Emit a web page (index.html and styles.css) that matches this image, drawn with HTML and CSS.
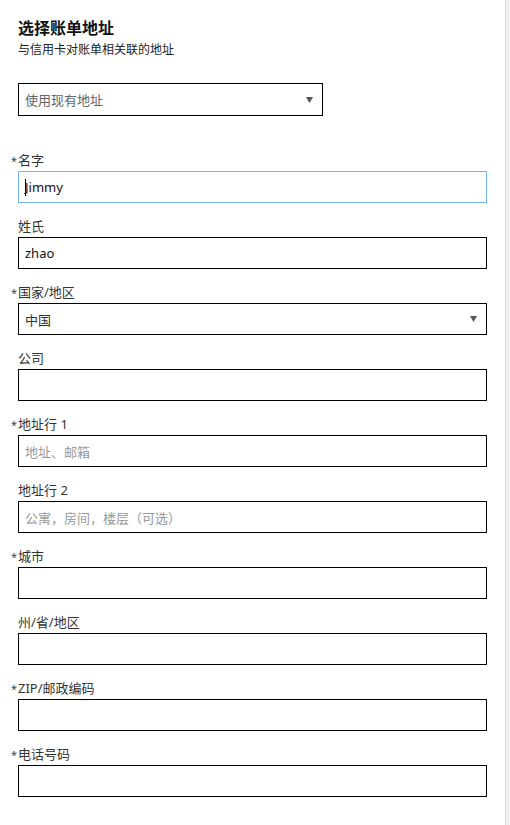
FILE: index.html
```html
<!DOCTYPE html>
<html lang="zh-CN">
<head>
<meta charset="utf-8">
<title>选择账单地址</title>
<link rel="stylesheet" href="styles.css">
</head>
<body>
<div class="shell">
  <main class="form">
    <h1 class="title">选择账单地址</h1>
    <p class="subtitle">与信用卡对账单相关联的地址</p>
    <div class="select select-short">
      <span class="select-value muted">使用现有地址</span>
      <svg class="arrow" width="7" height="6" viewBox="0 0 7 6"><path d="M0 0H7L3.5 6Z" fill="#555"/></svg>
    </div>

    <div class="fields">
      <div class="field">
        <label class="label"><span class="req">*</span>名字</label>
        <div class="box focused"><span class="caret"></span><span class="value">Jimmy</span></div>
      </div>
      <div class="field">
        <label class="label">姓氏</label>
        <div class="box"><span class="value">zhao</span></div>
      </div>
      <div class="field">
        <label class="label"><span class="req">*</span>国家/地区</label>
        <div class="select">
          <span class="select-value">中国</span>
          <svg class="arrow" width="7" height="6" viewBox="0 0 7 6"><path d="M0 0H7L3.5 6Z" fill="#555"/></svg>
        </div>
      </div>
      <div class="field">
        <label class="label">公司</label>
        <div class="box"></div>
      </div>
      <div class="field">
        <label class="label"><span class="req">*</span>地址行 1</label>
        <div class="box"><span class="placeholder">地址、邮箱</span></div>
      </div>
      <div class="field">
        <label class="label">地址行 2</label>
        <div class="box"><span class="placeholder">公寓，房间，楼层（可选）</span></div>
      </div>
      <div class="field">
        <label class="label"><span class="req">*</span>城市</label>
        <div class="box"></div>
      </div>
      <div class="field">
        <label class="label">州/省/地区</label>
        <div class="box"></div>
      </div>
      <div class="field">
        <label class="label"><span class="req">*</span>ZIP/邮政编码</label>
        <div class="box"></div>
      </div>
      <div class="field">
        <label class="label"><span class="req">*</span>电话号码</label>
        <div class="box"></div>
      </div>
    </div>
  </main>
  <div class="rail"></div>
</div>
</body>
</html>
```

FILE: styles.css
```css
html, body {
  margin: 0;
  padding: 0;
  background: #fff;
}
body {
  font-family: "Noto Sans", "Noto Sans CJK SC", sans-serif;
  color: #333;
}
.shell {
  display: flex;
  min-height: 825px;
}
.form {
  width: 469px;
  padding: 17px 0 0 18px;
  flex: none;
}
.rail {
  margin-left: auto;
  width: 4px;
  border-left: 1px solid #dedede;
  background: #f1f1f1;
}
.title {
  margin: 0;
  font-size: 16px;
  line-height: 22px;
  font-weight: 700;
  color: #111;
}
.subtitle {
  margin: 3px 0 0;
  font-size: 12px;
  line-height: 16px;
  color: #222;
}
.select {
  box-sizing: border-box;
  height: 32px;
  border: 1px solid #000;
  display: flex;
  align-items: center;
  justify-content: space-between;
  padding: 0 9px 0 6px;
  font-size: 13px;
  color: #333;
}
.select-short {
  width: 305px;
  height: 33px;
  margin-top: 25px;
}
.muted {
  color: #666;
}
.arrow {
  display: block;
}
.fields {
  margin-top: 36px;
  display: flex;
  flex-direction: column;
  gap: 15px;
}
.field {
  display: flex;
  flex-direction: column;
  gap: 2px;
}
.label {
  font-size: 13px;
  line-height: 17px;
  color: #333;
}
.req {
  display: inline-block;
  width: 7px;
  margin-left: -7px;
  font-size: 11px;
  color: #444;
  vertical-align: top;
}
.box {
  box-sizing: border-box;
  height: 32px;
  border: 1px solid #000;
  display: flex;
  align-items: center;
  padding: 0 6px;
  font-size: 13px;
  color: #111;
}
.box.focused {
  border-color: #70b6f5;
}
.caret {
  width: 1px;
  height: 17px;
  background: #000;
  margin-right: -1px;
}
.placeholder {
  color: #999;
}
```
